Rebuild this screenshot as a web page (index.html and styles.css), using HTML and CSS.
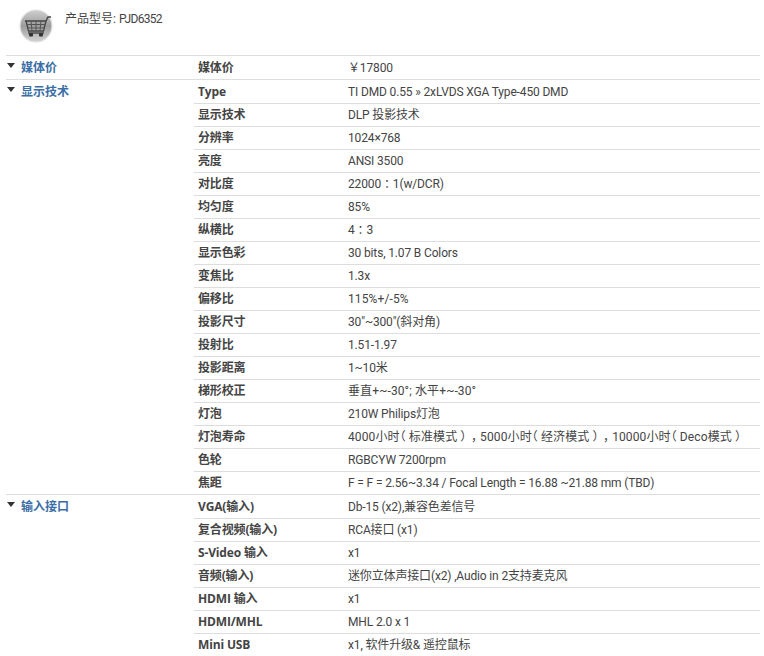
FILE: index.html
```html
<!DOCTYPE html>
<html lang="zh-CN">
<head>
<meta charset="utf-8">
<title>PJD6352</title>
<link rel="stylesheet" href="styles.css">
</head>
<body>
<header class="head">
  <svg class="cart" width="34" height="34" viewBox="0 0 34 34">
    <defs>
      <linearGradient id="disc" x1="0" y1="0" x2="0" y2="1">
        <stop offset="0" stop-color="#cfcfcf"/>
        <stop offset="0.5" stop-color="#9c9c9c"/>
        <stop offset="1" stop-color="#d4d4d4"/>
      </linearGradient>
    </defs>
    <circle cx="17" cy="17" r="16" fill="url(#disc)"/>
    <circle cx="17" cy="17" r="16" fill="none" stroke="#e2e2e2" stroke-width="1.2"/>
    <path d="M6 12h21l2-4h3" fill="none" stroke="#444" stroke-width="1.3"/>
    <path d="M7 12l2.5 10h15l2.5-10" fill="none" stroke="#444" stroke-width="1.3"/>
    <path d="M8 15.500h18M9 19h16M12 12l1 10M17 12v10M22 12l-1 10" stroke="#555" stroke-width="1"/>
    <path d="M9 24h16" stroke="#333" stroke-width="1.2"/>
    <rect x="10" y="24" width="4" height="3.500" rx="1" fill="#333"/>
    <rect x="20" y="24" width="4" height="3.500" rx="1" fill="#333"/>
  </svg>
  <p class="model">产品型号: <span class="code">PJD6352</span></p>
</header>
<main class="specs">
  <section class="group">
    <h3 class="group-title"><span class="arrow"></span>媒体价</h3>
    <div class="rows">
      <div class="row"><span class="key">媒体价</span><span class="val">￥17800</span></div>
    </div>
  </section>
  <section class="group">
    <h3 class="group-title"><span class="arrow"></span>显示技术</h3>
    <div class="rows">
      <div class="row"><span class="key">Type</span><span class="val">TI DMD 0.55 » 2xLVDS XGA Type-450 DMD</span></div>
      <div class="row"><span class="key">显示技术</span><span class="val">DLP 投影技术</span></div>
      <div class="row"><span class="key">分辨率</span><span class="val">1024×768</span></div>
      <div class="row"><span class="key">亮度</span><span class="val">ANSI 3500</span></div>
      <div class="row"><span class="key">对比度</span><span class="val">22000<span class="fw">：</span>1(w/DCR)</span></div>
      <div class="row"><span class="key">均匀度</span><span class="val">85%</span></div>
      <div class="row"><span class="key">纵横比</span><span class="val">4<span class="fw">：</span>3</span></div>
      <div class="row"><span class="key">显示色彩</span><span class="val">30 bits, 1.07 B Colors</span></div>
      <div class="row"><span class="key">变焦比</span><span class="val">1.3x</span></div>
      <div class="row"><span class="key">偏移比</span><span class="val wide">115%+/-5%</span></div>
      <div class="row"><span class="key">投影尺寸</span><span class="val">30"~300"(斜对角)</span></div>
      <div class="row"><span class="key">投射比</span><span class="val">1.51-1.97</span></div>
      <div class="row"><span class="key">投影距离</span><span class="val">1~10米</span></div>
      <div class="row"><span class="key">梯形校正</span><span class="val wide">垂直+~-30°; 水平+~-30°</span></div>
      <div class="row"><span class="key">灯泡</span><span class="val">210W Philips灯泡</span></div>
      <div class="row"><span class="key">灯泡寿命</span><span class="val wide">4000小时<span class="fw open">（</span>标准模式<span class="fw close">）</span><span class="fw">，</span>5000小时<span class="fw open">（</span>经济模式<span class="fw close">）</span><span class="fw">，</span>10000小时<span class="fw open">（</span>Deco模式<span class="fw close">）</span></span></div>
      <div class="row"><span class="key">色轮</span><span class="val">RGBCYW 7200rpm</span></div>
      <div class="row"><span class="key">焦距</span><span class="val">F = F = 2.56~3.34 / Focal Length = 16.88 ~21.88 mm (TBD)</span></div>
    </div>
  </section>
  <section class="group">
    <h3 class="group-title"><span class="arrow"></span>输入接口</h3>
    <div class="rows">
      <div class="row"><span class="key">VGA(输入)</span><span class="val">Db-15 (x2),兼容色差信号</span></div>
      <div class="row"><span class="key">复合视频(输入)</span><span class="val">RCA接口 (x1)</span></div>
      <div class="row"><span class="key">S-Video 输入</span><span class="val">x1</span></div>
      <div class="row"><span class="key">音频(输入)</span><span class="val">迷你立体声接口(x2) ,Audio in 2支持麦克风</span></div>
      <div class="row"><span class="key">HDMI 输入</span><span class="val">x1</span></div>
      <div class="row"><span class="key">HDMI/MHL</span><span class="val">MHL 2.0 x 1</span></div>
      <div class="row"><span class="key">Mini USB</span><span class="val">x1, 软件升级&amp; 遥控鼠标</span></div>
    </div>
  </section>
</main>
</body>
</html>
```
FILE: styles.css
```css
html, body {
  margin: 0;
  height: 656px;
  overflow: hidden;
  background: #fff;
}
body {
  padding: 0 4px 0 6px;
  font: 12px/22px Roboto, "Noto Sans CJK SC", sans-serif;
  color: #444;
}
.head {
  display: flex;
  align-items: flex-start;
  height: 55px;
  padding: 9px 0 0 13px;
  box-sizing: border-box;
}
.cart { flex: none; }
.model {
  margin: 1px 0 0 12px;
  line-height: 18px;
}
.code {
  font-size: 12px;
  letter-spacing: -0.7px;
}
.group {
  display: flex;
  border-top: 1px solid #ddd;
}
.group-title {
  display: flex;
  align-items: center;
  flex: none;
  align-self: flex-start;
  width: 188px;
  height: 23px;
  margin: 0;
  padding-left: 1px;
  box-sizing: border-box;
  font-size: 12px;
  font-weight: 700;
  color: #3a6ea5;
}
.arrow {
  width: 0;
  height: 0;
  margin: -4px 6px 0 0;
  border-left: 4.500px solid transparent;
  border-right: 4.500px solid transparent;
  border-top: 5px solid #333;
}
.rows { flex: 1; }
.row {
  display: flex;
  height: 22px;
  padding-left: 4px;
  border-top: 1px solid #ddd;
}
.row:first-child {
  height: 23px;
  border-top: 0;
  line-height: 24px;
}
.key {
  flex: none;
  width: 150px;
  font-family: "Open Sans", "Noto Sans CJK SC", sans-serif;
  font-weight: 700;
  letter-spacing: -0.15px;
}
.val {
  white-space: nowrap;
  letter-spacing: -0.15px;
}
.wide { letter-spacing: 0.12px; }
.fw {
  padding: 0 3px;
  font-feature-settings: "halt";
}
.open { padding: 0 3px 0 0; }
.close { padding: 0 1.500px 0 3px; }
```
